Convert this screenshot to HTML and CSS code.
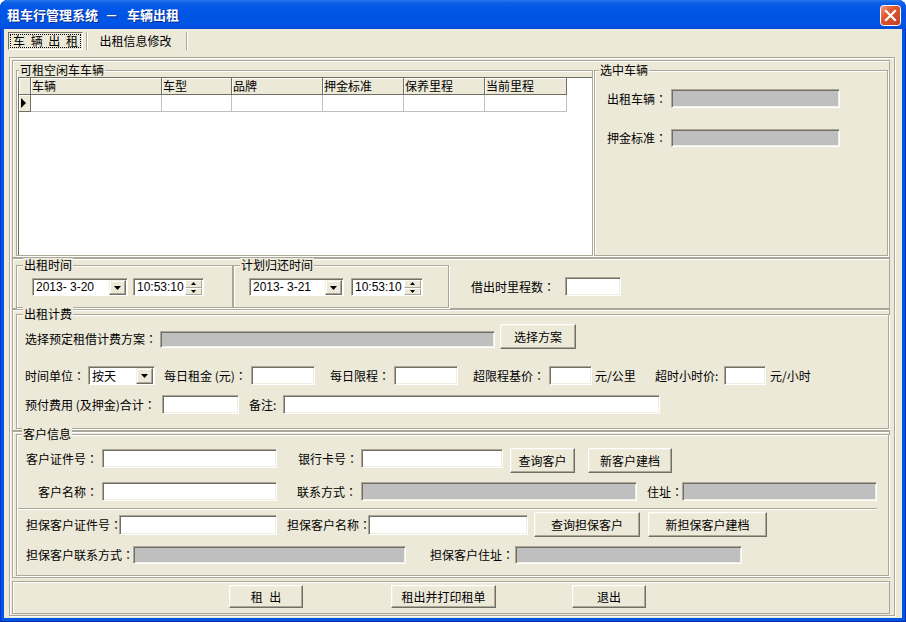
FILE: index.html
```html
<!DOCTYPE html>
<html lang="zh-CN">
<head>
<meta charset="utf-8">
<title>租车行管理系统 - 车辆出租</title>
<link rel="stylesheet" href="styles.css">
</head>
<body>
<div class="window">
  <div class="titlebar">
    <div class="title">租车行管理系统<span class="dash">－</span>车辆出租</div>
    <div class="close">
      <svg width="21" height="21" viewBox="0 0 21 21">
        <defs>
          <linearGradient id="cg" x1="0" y1="0" x2="1" y2="1">
            <stop offset="0" stop-color="#f3a488"/>
            <stop offset="0.35" stop-color="#e25a33"/>
            <stop offset="1" stop-color="#c13a1c"/>
          </linearGradient>
        </defs>
        <rect x="0.5" y="0.5" width="20" height="20" rx="3" fill="url(#cg)" stroke="#ffffff"/>
        <path d="M6 6L15 15M15 6L6 15" stroke="#ffffff" stroke-width="2.2" stroke-linecap="square"/>
      </svg>
    </div>
  </div>
  <div class="client">
    <div class="tabs">
      <div class="tab tab-active"><div class="focus">车 辆 出 租</div></div>
      <div class="tab-sep"></div>
      <div class="tab tab-2">出租信息修改</div>
      <div class="tab-sep"></div>
    </div>
    <div class="page">
      <!-- top: vehicle grid + selected vehicle -->
      <div class="panel panel-a">
        <div class="group g-grid">
          <div class="gtitle gt-2">可租空闲车车辆</div>
          <div class="grid">
            <div class="grow">
              <div class="hc c0"></div>
              <div class="hc c1">车辆</div>
              <div class="hc c2">车型</div>
              <div class="hc c3">品牌</div>
              <div class="hc c4">押金标准</div>
              <div class="hc c5">保养里程</div>
              <div class="hc c6">当前里程</div>
            </div>
            <div class="grow">
              <div class="hc c0 rowsel"><svg width="5" height="10" viewBox="0 0 5 10"><path d="M0 0L5 5L0 10Z" fill="#000"/></svg></div>
              <div class="dc c1"></div>
              <div class="dc c2"></div>
              <div class="dc c3"></div>
              <div class="dc c4"></div>
              <div class="dc c5"></div>
              <div class="dc c6"></div>
            </div>
          </div>
        </div>
        <div class="group g-sel">
          <div class="gtitle gt-4">选中车辆</div>
          <div class="row ac mt-12">
            <span class="lbl ml-12 w-64">出租车辆<span class="colon">：</span></span>
            <span class="inp gray w-169 h-19"></span>
          </div>
          <div class="row ac mt-21">
            <span class="lbl ml-12 w-64">押金标准<span class="colon">：</span></span>
            <span class="inp gray w-169 h-18"></span>
          </div>
        </div>
      </div>

      <!-- dates -->
      <div class="panel panel-b">
        <div class="group g-date1">
          <div class="gtitle gt-6">出租时间</div>
          <div class="row mt-6">
            <div class="dtp ml-15 w-96">
              <span class="dval">2013- 3-20</span>
              <span class="ddbtn"><svg width="7" height="4" viewBox="0 0 7 4"><path d="M0 0H7L3.5 4Z" fill="#000"/></svg></span>
            </div>
            <div class="dtp ml-5 w-71">
              <span class="dval">10:53:10</span>
              <span class="spin">
                <span class="sbtn"><svg width="5" height="3" viewBox="0 0 5 3"><path d="M0 3H5L2.5 0Z" fill="#000"/></svg></span>
                <span class="sbtn"><svg width="5" height="3" viewBox="0 0 5 3"><path d="M0 0H5L2.5 3Z" fill="#000"/></svg></span>
              </span>
            </div>
          </div>
        </div>
        <div class="group g-date2">
          <div class="gtitle gt-6">计划归还时间</div>
          <div class="row mt-6">
            <div class="dtp ml-15 w-95">
              <span class="dval">2013- 3-21</span>
              <span class="ddbtn"><svg width="7" height="4" viewBox="0 0 7 4"><path d="M0 0H7L3.5 4Z" fill="#000"/></svg></span>
            </div>
            <div class="dtp ml-7 w-72">
              <span class="dval">10:53:10</span>
              <span class="spin">
                <span class="sbtn"><svg width="5" height="3" viewBox="0 0 5 3"><path d="M0 3H5L2.5 0Z" fill="#000"/></svg></span>
                <span class="sbtn"><svg width="5" height="3" viewBox="0 0 5 3"><path d="M0 0H5L2.5 3Z" fill="#000"/></svg></span>
              </span>
            </div>
          </div>
        </div>
        <span class="lbl ml-22 w-94 mt-19 lh-18">借出时里程数<span class="colon">：</span></span>
        <span class="inp w-56 h-19 mt-18"></span>
      </div>

      <!-- fee -->
      <div class="panel panel-c">
        <div class="group g-fee">
          <div class="gtitle gt-6">出租计费</div>
          <div class="row mt-3">
            <span class="lbl ml-8 w-135 mt-6 lh-18">选择预定租借计费方案<span class="colon">：</span></span>
            <span class="inp gray w-335 h-17 mt-7"></span>
            <span class="btn ml-5 w-76 h-25">选择方案</span>
          </div>
          <div class="row ac mt-17">
            <span class="lbl ml-8 w-63">时间单位<span class="colon">：</span></span>
            <div class="combo w-67">
              <span class="cval">按天</span>
              <span class="ddbtn"><svg width="7" height="4" viewBox="0 0 7 4"><path d="M0 0H7L3.5 4Z" fill="#000"/></svg></span>
            </div>
            <span class="lbl ml-9 w-87">每日租金 (元)<span class="colon">：</span></span>
            <span class="inp w-64 h-19"></span>
            <span class="lbl ml-15 w-64">每日限程<span class="colon">：</span></span>
            <span class="inp w-64 h-19"></span>
            <span class="lbl ml-15 w-76">超限程基价<span class="colon">：</span></span>
            <span class="inp w-43 h-19"></span>
            <span class="lbl ml-3 w-60">元/公里</span>
            <span class="lbl w-69">超时小时价:</span>
            <span class="inp w-42 h-19"></span>
            <span class="lbl ml-4">元/小时</span>
          </div>
          <div class="row ac mt-10">
            <span class="lbl ml-8 w-137">预付费用 (及押金)合计<span class="colon">：</span></span>
            <span class="inp w-77 h-19"></span>
            <span class="lbl ml-10 w-34">备注:</span>
            <span class="inp w-377 h-19"></span>
          </div>
        </div>
      </div>

      <!-- customer -->
      <div class="panel panel-d">
        <div class="group g-cust">
          <div class="gtitle gt-5">客户信息</div>
          <div class="row mt-7">
            <span class="lbl ml-9 w-76 mt-1 lh-19">客户证件号<span class="colon">：</span></span>
            <span class="inp w-175 h-19 mt-1"></span>
            <span class="lbl ml-21 w-63 mt-1 lh-19">银行卡号<span class="colon">：</span></span>
            <span class="inp w-142 h-19 mt-1"></span>
            <span class="btn ml-7 w-65 h-25">查询客户</span>
            <span class="btn ml-13 w-84 h-25">新客户建档</span>
          </div>
          <div class="row ac mt-9">
            <span class="lbl ml-21 w-64">客户名称<span class="colon">：</span></span>
            <span class="inp w-175 h-19"></span>
            <span class="lbl ml-20 w-64">联系方式<span class="colon">：</span></span>
            <span class="inp gray w-276 h-19"></span>
            <span class="lbl ml-10 w-35">住址<span class="colon">：</span></span>
            <span class="inp gray w-195 h-19"></span>
          </div>
          <div class="sep"></div>
          <div class="row mt-2">
            <span class="lbl ml-9 w-93 mt-3 lh-20">担保客户证件号<span class="colon">：</span></span>
            <span class="inp w-158 h-20 mt-3"></span>
            <span class="lbl ml-10 w-81 mt-3 lh-20">担保客户名称<span class="colon">：</span></span>
            <span class="inp w-160 h-20 mt-3"></span>
            <span class="btn ml-6 w-106 h-25">查询担保客户</span>
            <span class="btn ml-8 w-119 h-25">新担保客户建档</span>
          </div>
          <div class="row ac mt-9">
            <span class="lbl ml-9 w-107">担保客户联系方式<span class="colon">：</span></span>
            <span class="inp gray w-273 h-18"></span>
            <span class="lbl ml-24 w-85">担保客户住址<span class="colon">：</span></span>
            <span class="inp gray w-227 h-18"></span>
          </div>
        </div>
      </div>

      <!-- bottom buttons -->
      <div class="panel panel-e">
        <div class="row mt-3">
          <span class="btn ml-216 w-74 h-23 spaced">租 出</span>
          <span class="btn ml-88 w-105 h-23">租出并打印租单</span>
          <span class="btn ml-76 w-74 h-23">退出</span>
        </div>
      </div>
    </div>
  </div>
</div>
</body>
</html>
```

FILE: styles.css
```css
* { box-sizing: border-box; }
html, body { margin: 0; padding: 0; }
body {
  width: 906px;
  height: 622px;
  overflow: hidden;
  background: #ffffff;
  font-family: "Noto Sans CJK SC", "Noto Sans", sans-serif;
  font-size: 12px;
  color: #000;
}

/* window frame */
.window {
  width: 906px;
  height: 622px;
  display: flex;
  flex-direction: column;
  background: #0055e5;
  border-radius: 8px 8px 0 0;
  box-shadow: inset 1px 0 0 #0831d9, inset -1px 0 0 #0028b0, inset 0 -1px 0 #0028b0;
}
.titlebar {
  height: 29px;
  flex: none;
  display: flex;
  align-items: center;
  padding-left: 7px;
  border-radius: 8px 8px 0 0;
  background: linear-gradient(#2a78ee 0, #0b5fe6 3px, #0257e8 8px, #0054e3 16px, #0056e6 24px, #004ad8 29px);
  color: #fff;
  font-weight: bold;
  font-size: 13px;
}
.title {
  flex: 1;
  white-space: nowrap;
  text-shadow: 1px 1px 0 #0a2a8a;
}
.dash { margin: 0 9px 0 7px; }
.close {
  width: 21px;
  height: 21px;
  margin-right: 5px;
  margin-top: 1px;
}
.close svg { display: block; }

.client {
  flex: 1;
  margin: 0 4px 4px 4px;
  background: #ece9d8;
  display: flex;
  flex-direction: column;
}

/* tabs */
.tabs {
  display: flex;
  align-items: flex-start;
  padding: 3px 0 0 4px;
  height: 21px;
  flex: none;
}
.tab {
  height: 18px;
  display: flex;
  align-items: center;
  justify-content: center;
  white-space: nowrap;
  line-height: 14px;
}
.tab-active {
  width: 75px;
  padding: 1px;
  border: 1px solid;
  border-color: #716f64 #ffffff #ffffff #716f64;
}
.focus {
  width: 100%;
  height: 100%;
  border: 1px dotted #000;
  display: flex;
  align-items: center;
  justify-content: center;
  word-spacing: 3px;
}
.tab-sep {
  width: 2px;
  height: 18px;
  margin-left: 3px;
  border-left: 1px solid #aca899;
  border-right: 1px solid #ffffff;
}
.tab-2 { width: 95px; margin-left: 0; }

/* page */
.page {
  margin: 7px 0 0 5px;
  width: 886px;
  height: 559px;
  border: 1px solid #aca899;
  box-shadow: inset 1px 1px 0 #ffffff, 1px 1px 0 #ffffff;
  display: flex;
  flex-direction: column;
  flex: none;
}
.panel {
  margin-left: 2px;
  width: 878px;
  border: 1px solid #aca899;
  box-shadow: inset 1px 1px 0 #ffffff;
  flex: none;
}
.panel-a { margin-top: 2px; height: 198px; display: flex; align-items: flex-start; }
.panel-b { height: 51px; display: flex; align-items: flex-start; }
.panel-c { height: 122px; }
.panel-d { height: 147px; }
.panel-e { margin-top: 3px; height: 33px; }

/* group boxes */
.group {
  border: 1px solid #aca899;
  box-shadow: inset 1px 1px 0 #ffffff, 1px 1px 0 #ffffff;
  flex: none;
}
.gtitle {
  display: block;
  width: fit-content;
  height: 14px;
  line-height: 14px;
  margin-top: -8px;
  padding: 0 1px;
  background: #ece9d8;
  white-space: nowrap;
}
.gt-2 { margin-left: 2px; }
.gt-4 { margin-left: 4px; }
.gt-5 { margin-left: 5px; }
.gt-6 { margin-left: 6px; }

.g-grid { margin: 9px 0 0 3px; width: 577px; height: 186px; }
.g-sel { margin: 9px 0 0 1px; width: 294px; height: 186px; }
.g-date1 { margin: 6px 0 0 3px; width: 217px; height: 43px; }
.g-date2 { margin: 6px 0 0 0; width: 216px; height: 43px; }
.g-fee { margin: 4px 0 0 3px; width: 873px; height: 115px; }
.g-cust { margin: 2px 0 0 3px; width: 873px; height: 142px; }

/* grid */
.grid {
  margin-left: 1px;
  width: 574px;
  height: 178px;
  background: #ffffff;
  border-top: 1px solid #716f64;
  border-left: 1px solid #716f64;
}
.grow { display: flex; height: 17px; }
.hc {
  flex: none;
  height: 17px;
  background: #ece9d8;
  border-right: 1px solid #716f64;
  border-bottom: 1px solid #716f64;
  box-shadow: inset 1px 1px 0 #ffffff;
  padding-left: 1px;
  line-height: 16px;
  white-space: nowrap;
}
.dc {
  flex: none;
  height: 17px;
  background: #ffffff;
  border-right: 1px solid #c0c0c0;
  border-bottom: 1px solid #c0c0c0;
}
.rowsel {
  display: flex;
  align-items: center;
  padding-left: 2px;
}
.rowsel svg { display: block; }
.c0 { width: 12px; }
.c1 { width: 131px; }
.c2 { width: 70px; }
.c3 { width: 91px; }
.c4 { width: 81px; }
.c5 { width: 81px; }
.c6 { width: 82px; }

/* rows and controls */
.row { display: flex; align-items: flex-start; }
.row.ac { align-items: center; }
.lbl {
  display: block;
  flex: none;
  white-space: nowrap;
  line-height: 16px;
}
.colon {
  font-family: "Noto Sans CJK JP", "Noto Sans CJK TC", sans-serif;
  font-feature-settings: "locl" 0;
}
.inp {
  display: block;
  flex: none;
  background: #ffffff;
  border: 1px solid;
  border-color: #aca899 #ffffff #ffffff #aca899;
  box-shadow: inset 1px 1px 0 #716f64, inset -1px -1px 0 #f1efe2;
}
.inp.gray { background: #bfbfbf; }
.btn {
  display: flex;
  flex: none;
  align-items: center;
  justify-content: center;
  white-space: nowrap;
  background: #ece9d8;
  border: 1px solid;
  border-color: #ffffff #716f64 #716f64 #ffffff;
  box-shadow: inset -1px -1px 0 #aca899, inset 1px 1px 0 #f1efe2;
}
.spaced { word-spacing: 4px; }
.sep {
  margin: 7px 0 0 1px;
  width: 859px;
  height: 2px;
  border-top: 1px solid #aca899;
  border-bottom: 1px solid #ffffff;
}

/* date/time pickers and combo */
.dtp, .combo {
  display: flex;
  flex: none;
  height: 18px;
  background: #ffffff;
  border: 1px solid;
  border-color: #aca899 #ffffff #ffffff #aca899;
  box-shadow: inset 1px 1px 0 #716f64;
  padding: 1px 1px 0 1px;
}
.combo { height: 19px; }
.dval {
  flex: 1;
  font-family: "Liberation Sans", Arial, sans-serif;
  font-size: 12px;
  line-height: 15px;
  padding-left: 2px;
  white-space: pre;
}
.cval {
  flex: 1;
  line-height: 16px;
  padding-left: 2px;
}
.ddbtn {
  width: 17px;
  flex: none;
  display: flex;
  align-items: center;
  justify-content: center;
  background: #ece9d8;
  border: 1px solid;
  border-color: #f1efe2 #716f64 #716f64 #f1efe2;
  box-shadow: inset -1px -1px 0 #aca899, inset 1px 1px 0 #ffffff;
}
.ddbtn svg, .sbtn svg { display: block; }
.spin {
  width: 17px;
  flex: none;
  display: flex;
  flex-direction: column;
}
.sbtn {
  flex: 1;
  display: flex;
  align-items: center;
  justify-content: center;
  background: #ece9d8;
  border: 1px solid;
  border-color: #ffffff #aca899 #aca899 #ffffff;
}

/* utilities: widths */
.w-34 { width: 34px; } .w-35 { width: 35px; } .w-42 { width: 42px; } .w-43 { width: 43px; }
.w-56 { width: 56px; } .w-60 { width: 60px; } .w-63 { width: 63px; } .w-64 { width: 64px; }
.w-65 { width: 65px; } .w-67 { width: 67px; } .w-69 { width: 69px; } .w-71 { width: 71px; }
.w-72 { width: 72px; } .w-74 { width: 74px; } .w-76 { width: 76px; } .w-77 { width: 77px; }
.w-81 { width: 81px; } .w-84 { width: 84px; } .w-85 { width: 85px; } .w-87 { width: 87px; }
.w-93 { width: 93px; } .w-94 { width: 94px; } .w-95 { width: 95px; } .w-96 { width: 96px; }
.w-105 { width: 105px; } .w-106 { width: 106px; } .w-107 { width: 107px; } .w-119 { width: 119px; }
.w-135 { width: 135px; } .w-137 { width: 137px; } .w-142 { width: 142px; } .w-158 { width: 158px; }
.w-160 { width: 160px; } .w-169 { width: 169px; } .w-175 { width: 175px; } .w-195 { width: 195px; }
.w-227 { width: 227px; } .w-273 { width: 273px; } .w-276 { width: 276px; } .w-335 { width: 335px; }
.w-377 { width: 377px; }

/* heights */
.h-17 { height: 17px; } .h-18 { height: 18px; } .h-19 { height: 19px; } .h-20 { height: 20px; }
.h-23 { height: 23px; } .h-25 { height: 25px; }
.lh-18 { line-height: 18px; } .lh-19 { line-height: 19px; } .lh-20 { line-height: 20px; }

/* margins */
.ml-3 { margin-left: 3px; } .ml-4 { margin-left: 4px; } .ml-5 { margin-left: 5px; }
.ml-6 { margin-left: 6px; } .ml-7 { margin-left: 7px; } .ml-8 { margin-left: 8px; }
.ml-9 { margin-left: 9px; } .ml-10 { margin-left: 10px; } .ml-12 { margin-left: 12px; }
.ml-13 { margin-left: 13px; } .ml-15 { margin-left: 15px; } .ml-20 { margin-left: 20px; }
.ml-21 { margin-left: 21px; } .ml-22 { margin-left: 22px; } .ml-24 { margin-left: 24px; }
.ml-76 { margin-left: 76px; } .ml-88 { margin-left: 88px; } .ml-216 { margin-left: 216px; }
.mt-1 { margin-top: 1px; } .mt-2 { margin-top: 2px; } .mt-3 { margin-top: 3px; }
.mt-6 { margin-top: 6px; } .mt-7 { margin-top: 7px; } .mt-9 { margin-top: 9px; }
.mt-10 { margin-top: 10px; } .mt-12 { margin-top: 12px; } .mt-17 { margin-top: 17px; }
.mt-18 { margin-top: 18px; } .mt-19 { margin-top: 19px; } .mt-21 { margin-top: 21px; }
```
